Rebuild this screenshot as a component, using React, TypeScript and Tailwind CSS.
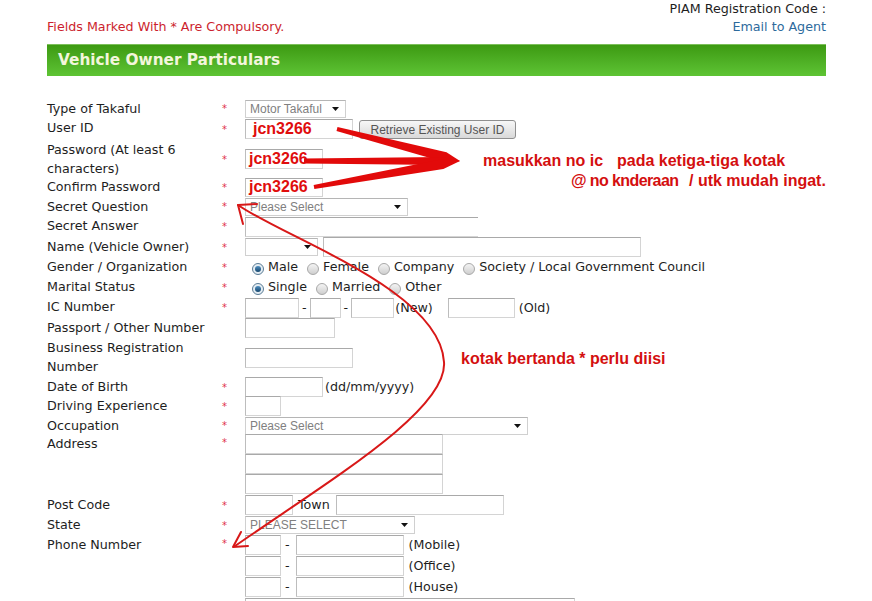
import React from 'react';

type RowProps = {
  label: React.ReactNode;
  req?: boolean;
  h: string;
  children?: React.ReactNode;
  top?: boolean;
};

const Row: React.FC<RowProps> = ({ label, req, h, children, top }) => (
  <div className={`grid grid-cols-[175px_23px_1fr] ${h}`}>
    <div className="self-start leading-[19px]">{label}</div>
    <div className={`${top ? 'self-start' : 'self-center'} leading-[17px] text-[10px] text-[#e0324b]`}>{req ? '*' : ''}</div>
    <div className={`flex ${top ? 'flex-col self-start' : 'items-center self-center'}`}>{children}</div>
  </div>
);

const Box: React.FC<{ w: string; children?: React.ReactNode; h?: string; open?: boolean }> = ({ w, children, h, open }) => (
  <div
    className={`${w} ${h ?? 'h-[20px]'} shrink-0 border border-[#d4d4d4] border-t-[#a9a9a9] border-l-[#bdbdbd] ${open ? 'border-r-0' : ''} bg-white flex items-center overflow-visible`}
  >
    {children}
  </div>
);

const Select: React.FC<{ w: string; text?: string }> = ({ w, text }) => (
  <div
    className={`${w} h-[18px] shrink-0 border border-[#d0d0d0] border-t-[#b5b5b5] bg-white flex items-center justify-between pl-[4px] pr-[6px] font-['Liberation_Sans',Arial,sans-serif] text-[12px] text-[#808080]`}
  >
    <span>{text}</span>
    <svg width="7" height="4" viewBox="0 0 7 4"><path d="M0 0h7L3.5 4z" fill="#111" /></svg>
  </div>
);

const Radio: React.FC<{ on?: boolean; first?: boolean }> = ({ on, first }) => (
  <span
    className={`${first ? 'ml-[7px]' : 'ml-[9px]'} mr-[4px] mt-[4px] w-[12px] h-[12px] shrink-0 rounded-full border flex items-center justify-center ${
      on ? 'border-[#5b7c95] bg-[#e4edf3]' : 'border-[#a8a8a8] bg-linear-to-b from-[#f4f4f4] to-[#cfcfcf]'
    }`}
  >
    {on && <span className="w-[6px] h-[6px] rounded-full bg-linear-to-b from-[#4f8fc0] to-[#17476d]" />}
  </span>
);

const Jcn: React.FC<{ pl: string }> = ({ pl }) => (
  <span className={`${pl} font-['Liberation_Sans',Arial,sans-serif] font-bold text-[16px] text-[#e00d0d] whitespace-nowrap`}>jcn3266</span>
);

function taper(ax: number, ay: number, tx: number, ty: number, w0: number, w1: number) {
  const dx = tx - ax;
  const dy = ty - ay;
  const len = Math.hypot(dx, dy);
  const nx = -dy / len;
  const ny = dx / len;
  const bx = ax + dx * 0.88;
  const by = ay + dy * 0.88;
  const p = [
    [ax + nx * w0 / 2, ay + ny * w0 / 2],
    [bx + nx * w1 / 2, by + ny * w1 / 2],
    [tx, ty],
    [bx - nx * w1 / 2, by - ny * w1 / 2],
    [ax - nx * w0 / 2, ay - ny * w0 / 2],
  ];
  return p.map((q) => q.join(',')).join(' ');
}

export default function App() {
  const red = "font-['Liberation_Sans',Arial,sans-serif] font-bold text-[16px] leading-[18px] text-[#d40f0f] whitespace-nowrap";

  return (
    <div className="relative w-[872px] h-[601px] overflow-hidden bg-white font-['DejaVu_Sans',Verdana,sans-serif] text-[12.7px] text-[#1e1e1e]">
      <div className="ml-[47px] w-[779px]">
        <div className="text-right leading-[17px]">PIAM Registration Code :</div>
        <div className="flex justify-between leading-[19px]">
          <span className="text-[#cc1f2e]">Fields Marked With * Are Compulsory.</span>
          <a className="text-[#2d6a9c]">Email to Agent</a>
        </div>
        <div className="mt-[8px] h-[32px] border-t border-[#7cbf5a] bg-linear-to-b from-[#3d9a11] to-[#5ec434] pl-[11px] flex items-center">
          <span className="font-bold text-[15.3px] text-[#f3f6dc]">Vehicle Owner Particulars</span>
        </div>

        <div className="mt-[23px]">
          <Row label="Type of Takaful" req h="h-[19px]">
            <Select w="w-[101px]" text="Motor Takaful" />
          </Row>
          <Row label="User ID" req h="h-[22px]">
            <Box w="w-[108px]"><Jcn pl="pl-[7px]" /></Box>
            <button className="ml-[6px] w-[157px] h-[19px] rounded-[3px] border border-[#8f8f8f] bg-linear-to-b from-[#f7f7f7] to-[#d9d9d9] font-['Liberation_Sans',Arial,sans-serif] text-[12px] text-[#555]">
              Retrieve Existing User ID
            </button>
          </Row>
          <Row label={<>Password (At least 6<br />characters)</>} req h="h-[37px]">
            <Box w="w-[78px]"><Jcn pl="pl-[3px]" /></Box>
          </Row>
          <Row label="Confirm Password" req h="h-[20px]">
            <Box w="w-[78px]" h="h-[19px]"><Jcn pl="pl-[3px]" /></Box>
          </Row>
          <Row label="Secret Question" req h="h-[19px]">
            <Select w="w-[163px]" text="Please Select" />
          </Row>
          <Row label="Secret Answer" req h="h-[21px]">
            <Box w="w-[233px]" open />
          </Row>
          <Row label="Name (Vehicle Owner)" req h="h-[20px]">
            <Select w="w-[73px]" />
            <div className="ml-[5px]"><Box w="w-[318px]" /></div>
          </Row>
          <Row label="Gender / Organization" req h="h-[20px]">
            <Radio on first />Male
            <Radio />Female
            <Radio />Company
            <Radio />Society / Local Government Council
          </Row>
          <Row label="Marital Status" req h="h-[20px]">
            <Radio on first />Single
            <Radio />Married
            <Radio />Other
          </Row>
          <Row label="IC Number" req h="h-[21px]">
            <Box w="w-[54px]" />
            <span className="mx-[3px]">-</span>
            <Box w="w-[31px]" />
            <span className="mx-[3px]">-</span>
            <Box w="w-[43px]" />
            <span className="ml-[1px]">(New)</span>
            <div className="ml-[15px]"><Box w="w-[67px]" /></div>
            <span className="ml-[4px]">(Old)</span>
          </Row>
          <Row label="Passport / Other Number" h="h-[20px]">
            <Box w="w-[90px]" />
          </Row>
          <Row label={<>Business Registration<br />Number</>} h="h-[39px]">
            <Box w="w-[108px]" />
          </Row>
          <Row label="Date of Birth" req h="h-[19px]">
            <Box w="w-[78px]" />
            <span className="ml-[2px]">(dd/mm/yyyy)</span>
          </Row>
          <Row label="Driving Experience" req h="h-[20px]">
            <Box w="w-[36px]" />
          </Row>
          <Row label="Occupation" req h="h-[18px]">
            <Select w="w-[283px]" text="Please Select" />
          </Row>
          <Row label="Address" req h="h-[61px]" top>
            <Box w="w-[198px]" />
            <Box w="w-[198px]" />
            <Box w="w-[198px]" />
          </Row>
          <Row label="Post Code" req h="h-[20px]">
            <Box w="w-[48px]" />
            <span className="ml-[5px]">Town</span>
            <div className="ml-[6px]"><Box w="w-[168px]" /></div>
          </Row>
          <Row label="State" req h="h-[20px]">
            <Select w="w-[170px]" text="PLEASE SELECT" />
          </Row>
          <Row label="Phone Number" req h="h-[63px]" top>
            {['(Mobile)', '(Office)', '(House)'].map((t) => (
              <div key={t} className="flex items-start h-[21px]">
                <Box w="w-[36px]" />
                <span className="ml-[4px] mr-[6px] leading-[20px]">-</span>
                <Box w="w-[108px]" />
                <span className="ml-[5px] leading-[20px]">{t}</span>
              </div>
            ))}
          </Row>
          <Row label="" h="h-[20px]" top>
            <Box w="w-[330px]" />
          </Row>
        </div>
      </div>

      {/* hand-drawn annotations */}
      <svg className="absolute left-0 top-0 pointer-events-none" width="872" height="601" viewBox="0 0 872 601">
        <g fill="#e20a0a">
          <polygon points={taper(337, 129, 460, 161, 4, 10)} />
          <polygon points={taper(304, 161, 460, 161, 5, 8)} />
          <polygon points={taper(314, 187, 460, 161, 4, 10)} />
        </g>
        <g fill="none" stroke="#d81818" strokeWidth="2" strokeLinecap="round">
          <path d="M238 205 C 285 238, 440 290, 444 362 C 448 410, 330 480, 235 546" />
          <path d="M238 205 L257 204 M238 205 L243 224" />
          <path d="M233 547 L241 532 M233 547 L248 546" />
        </g>
      </svg>
      <span className={`absolute left-[483px] top-[152px] ${red}`}>masukkan no ic</span>
      <span className={`absolute left-[617px] top-[152px] ${red}`}>pada ketiga-tiga kotak</span>
      <span className={`absolute left-[571px] top-[172px] tracking-[-0.6px] ${red}`}>@ no knderaan</span>
      <span className={`absolute left-[689px] top-[172px] ${red}`}>/ utk mudah ingat.</span>
      <span className={`absolute left-[461px] top-[350px] ${red}`}>kotak bertanda * perlu diisi</span>
    </div>
  );
}
